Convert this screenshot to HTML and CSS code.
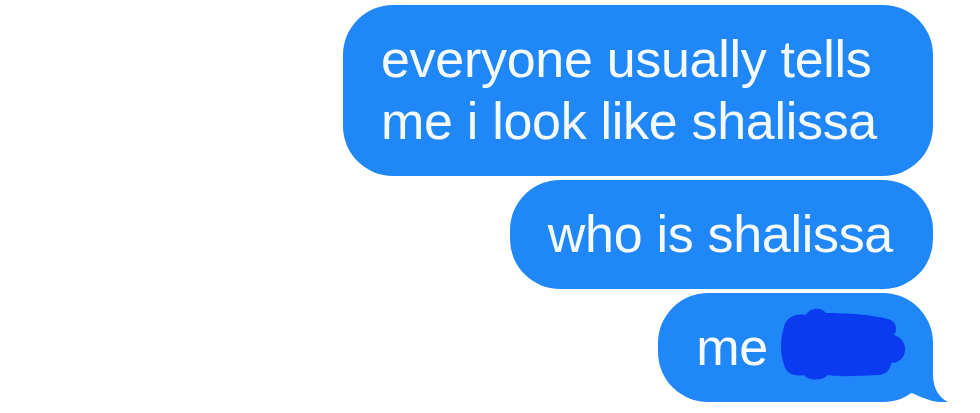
FILE: index.html
```html
<!DOCTYPE html>
<html lang="en">
<head>
<meta charset="utf-8">
<title>Messages</title>
<link rel="stylesheet" href="styles.css">
</head>
<body>
<main class="thread">
  <div class="bubble">everyone usually tells me i look like shalissa</div>
  <div class="bubble">who is shalissa</div>
  <div class="bubble bubble--last">me <svg class="scribble" width="130" height="75" viewBox="0 0 130 75" aria-hidden="true"><path d="M6 20 C8 10 18 6 28 8 C32 0 44 0 48 6 C70 6 95 8 110 12 C118 14 120 22 116 28 C124 30 128 38 127 44 C126 52 120 56 113 56 C113 63 107 68 100 68 C80 69 60 70 50 68 C44 74 30 74 26 68 C16 70 8 66 6 58 C2 46 2 32 6 20 Z"/></svg><svg class="tail" width="50" height="53" viewBox="0 0 50 53" aria-hidden="true"><path d="M33 2 L33 24 C33 40 40 48 48 52 C35 53.5 22 48 10 42 L4 10 Z"/></svg></div>
</main>
</body>
</html>
```
FILE: styles.css
```css
html, body {
  margin: 0;
  padding: 0;
  background: #ffffff;
}

.thread {
  display: flex;
  flex-direction: column;
  align-items: flex-end;
  gap: 4px;
  padding: 5px 47px 0 0;
}

.bubble {
  position: relative;
  box-sizing: border-box;
  max-width: 590px;
  padding: 23px 40px 24px 38px;
  border-radius: 50px;
  background: #1f87f7;
  color: #f4faff;
  font-family: "Liberation Sans", Arial, sans-serif;
  font-size: 52px;
  line-height: 62px;
  letter-spacing: -0.3px;
}

.bubble--last {
  padding-left: 38px;
  padding-right: 25px;
}

.scribble {
  display: inline-block;
  margin: -10px 0 -10px -4px;
  vertical-align: -7px;
  fill: #0a3bef;
}

.tail {
  position: absolute;
  right: -17px;
  bottom: -1px;
  fill: #1f87f7;
}
```
